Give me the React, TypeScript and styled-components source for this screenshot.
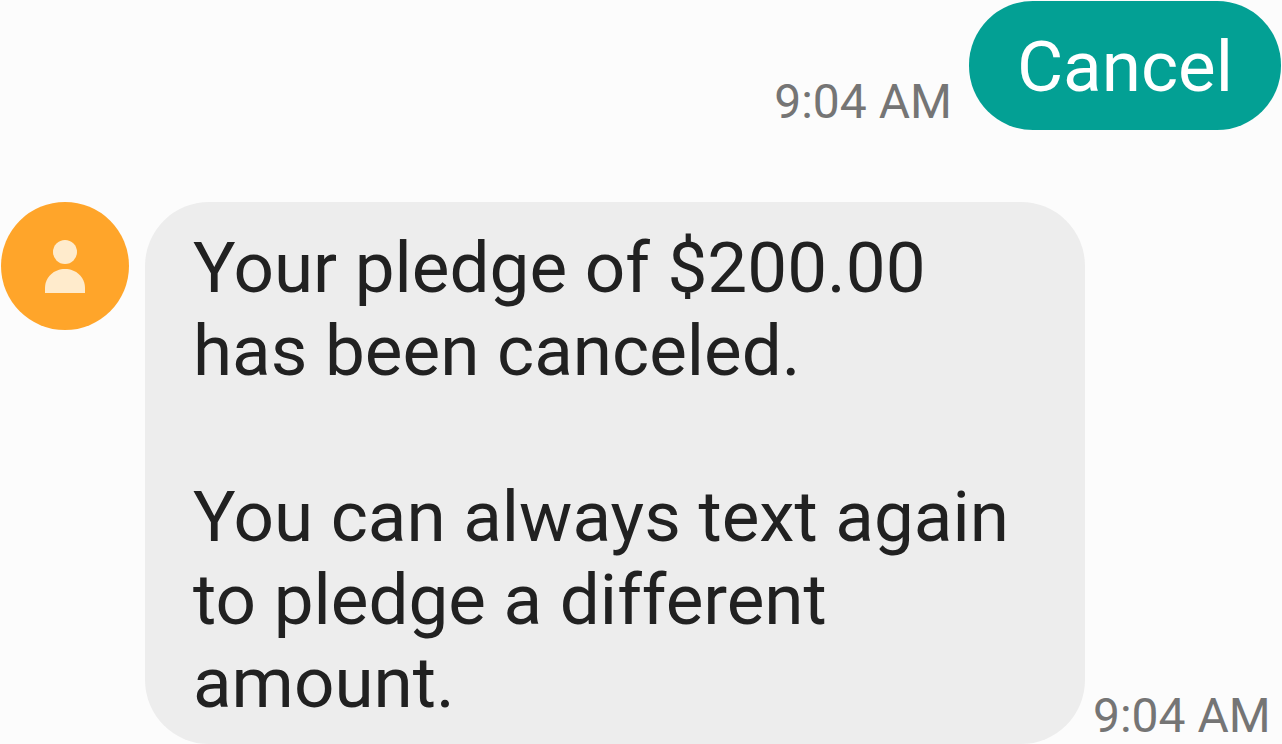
import React from "react";
import styled, { createGlobalStyle } from "styled-components";

const GlobalStyle = createGlobalStyle`
  * { box-sizing: border-box; }
  body { margin: 0; background: #fcfcfc; font-family: Roboto, "Liberation Sans", sans-serif; }
`;

const Conversation = styled.main`
  display: flex;
  flex-direction: column;
  gap: 72px;
  padding: 1px 1px 1px;
`;

const MessageRow = styled.article<{ $sent?: boolean }>`
  display: flex;
  align-items: flex-end;
  justify-content: ${(p) => (p.$sent ? "flex-end" : "flex-start")};
`;

const Bubble = styled.div<{ $sent?: boolean }>`
  padding: ${(p) => (p.$sent ? "24px 48px 22px" : "24px 48px 20px")};
  border-radius: 64px;
  max-width: 940px;
  font-size: 71px;
  line-height: 83px;
  color: ${(p) => (p.$sent ? "#ffffff" : "#212121")};
  background: ${(p) => (p.$sent ? "#03a094" : "#ededed")};
`;

const Paragraph = styled.p`
  margin: 0;
  & + & { margin-top: 83px; }
`;

const Time = styled.time<{ $sent?: boolean }>`
  font-size: 48px;
  line-height: 56px;
  color: #757575;
  white-space: nowrap;
  margin: ${(p) => (p.$sent ? "0 17px 0 0" : "0 0 0 8px")};
`;

const Avatar = styled.svg`
  flex: none;
  align-self: flex-start;
  width: 128px;
  height: 128px;
  margin-right: 16px;
`;

export default function App() {
  return (
    <>
      <GlobalStyle />
      <Conversation>
        <MessageRow $sent>
          <Time $sent dateTime="09:04">9:04 AM</Time>
          <Bubble $sent>Cancel</Bubble>
        </MessageRow>
        <MessageRow>
          <Avatar viewBox="0 0 128 128" role="img" aria-label="Contact">
            <circle cx="64" cy="64" r="64" fill="#ffa52a" />
            <circle cx="64" cy="50" r="12" fill="#ffebcc" />
            <path d="M44 91v-5c0-11 9-19 20-19s20 8 20 19v5z" fill="#ffebcc" />
          </Avatar>
          <Bubble>
            <Paragraph>Your pledge of $200.00 has been canceled.</Paragraph>
            <Paragraph>You can always text again to pledge a different amount.</Paragraph>
          </Bubble>
          <Time dateTime="09:04">9:04 AM</Time>
        </MessageRow>
      </Conversation>
    </>
  );
}
